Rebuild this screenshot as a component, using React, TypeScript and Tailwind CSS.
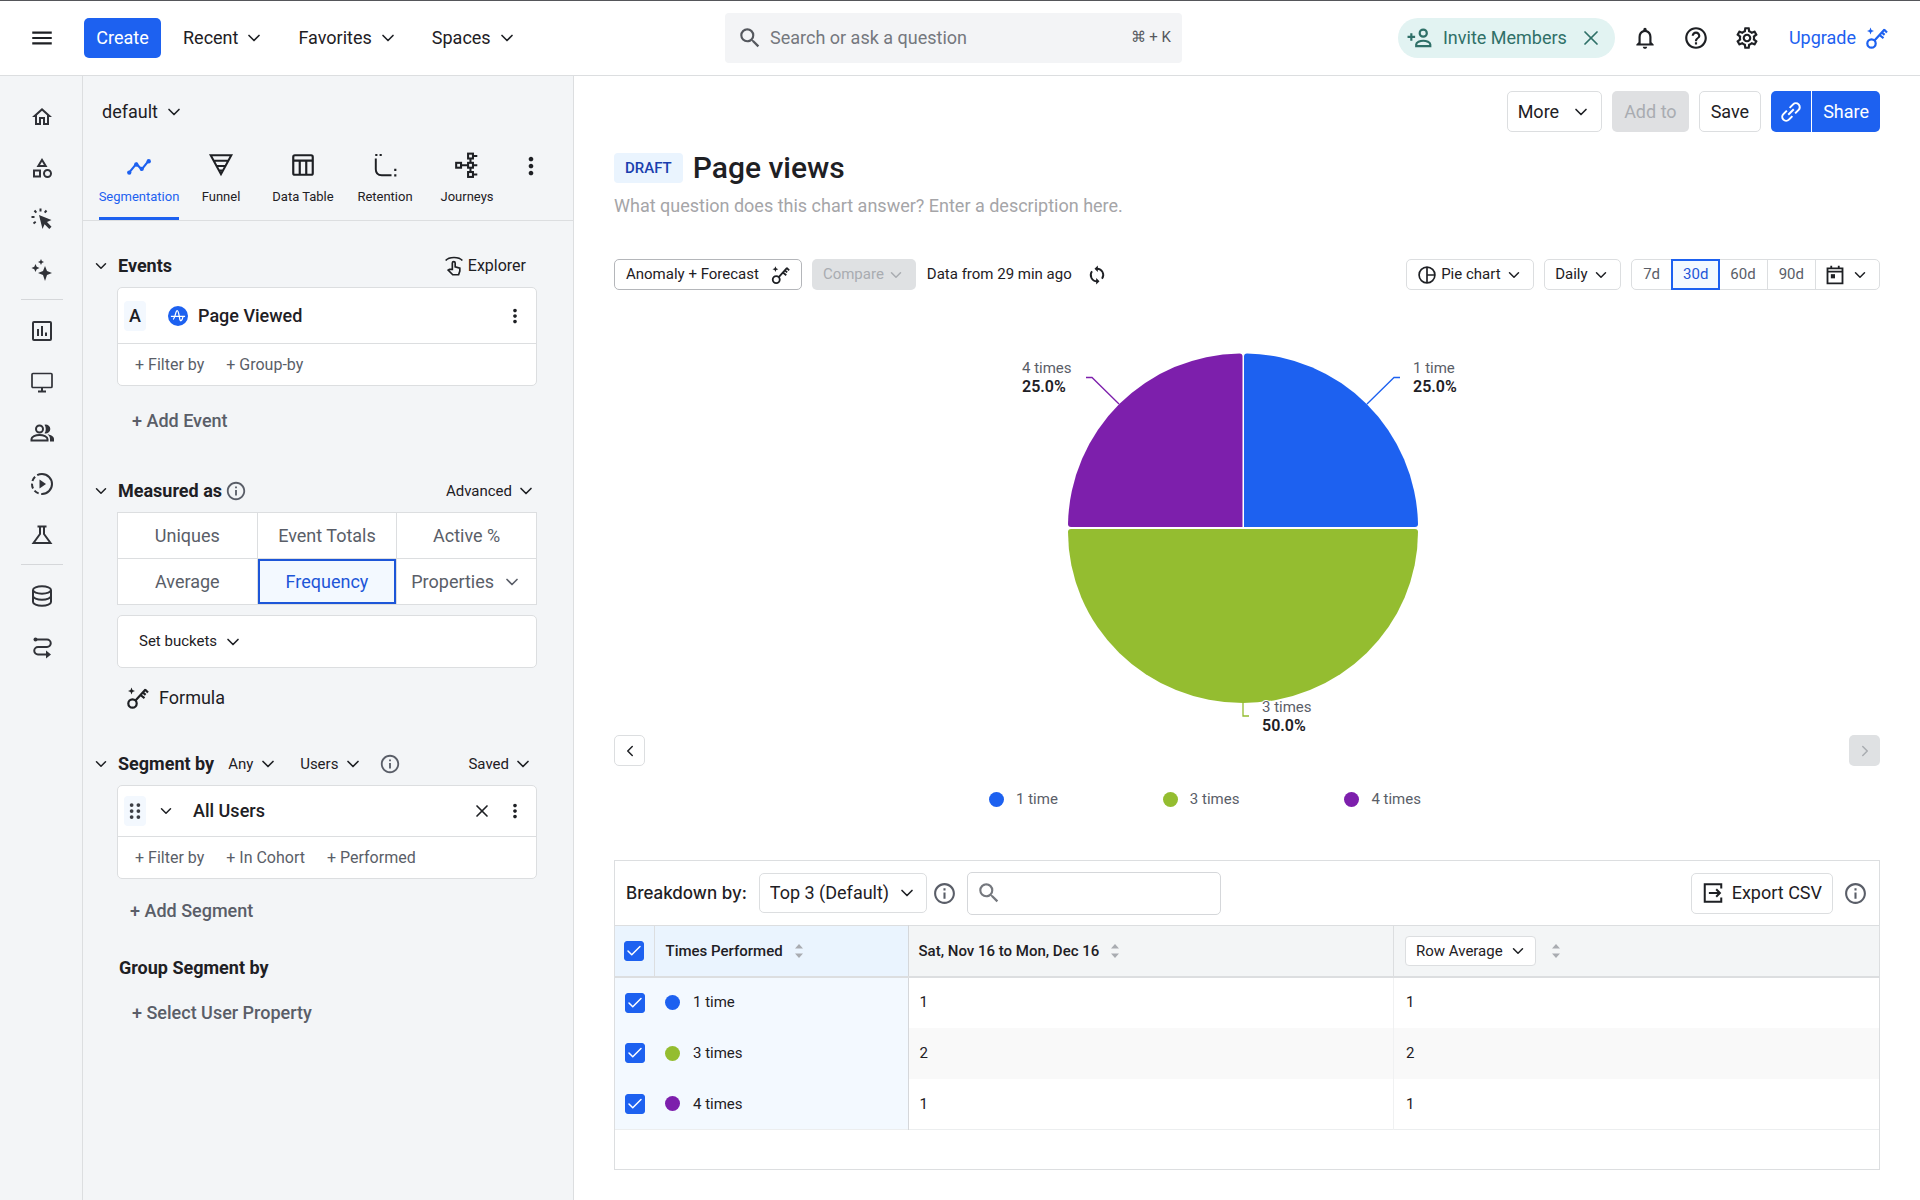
import { useState } from 'react'
import type { ReactNode, SVGProps } from 'react'
import clsx from 'clsx'
import { Check, ChevronDown, ChevronLeft, ChevronRight, X } from 'lucide-react'
import {
  MdHelpOutline,
  MdInfoOutline,
  MdMenu,
  MdMoreVert,
  MdNotificationsNone,
  MdOutlineCategory,
  MdOutlineHome,
  MdOutlineSettings,
  MdSearch,
} from 'react-icons/md'

const series = [
  { id: 's1', label: '1 time', dot: 'bg-[#1d61f0]', value: 1, average: 1 },
  { id: 's3', label: '3 times', dot: 'bg-[#94bd30]', value: 2, average: 2 },
  { id: 's4', label: '4 times', dot: 'bg-[#7d1fac]', value: 1, average: 1 },
]

/* ---------- Icons ---------- */

function Icon({ children, className = 'size-6', ...rest }: SVGProps<SVGSVGElement>) {
  return (
    <svg
      viewBox="0 0 24 24"
      fill="none"
      stroke="currentColor"
      strokeWidth="2"
      aria-hidden="true"
      className={clsx('shrink-0', className)}
      {...rest}
    >
      {children}
    </svg>
  )
}

function KeyIcon({ className }: { className?: string }) {
  return (
    <Icon className={className} strokeWidth="2.2">
      <circle cx="7.5" cy="17.5" r="4.2" />
      <path d="M10.5 14.5 20.5 3.5M20 3.5l3 3M15.5 9l4 3.2M17.8 6.4l2.8 2.4" />
      <path d="M6.5 1.5l1 2.5 2.5 1-2.5 1-1 2.5-1-2.5L3 5l2.5-1z" fill="currentColor" stroke="none" />
    </Icon>
  )
}

function ClickIcon() {
  return (
    <Icon>
      <path d="M9 8l12.500 5-4.500 2 4.500 4.700-2.200 2.200-4.700-4.700L12.500 22z" fill="currentColor" stroke="none" />
      <path d="M10.500 1.500v3M4.500 3.500l1.800 2.200M16.500 3.500l-1.800 2.200M1.500 10h3M3.500 16.500l2.200-1.700" />
    </Icon>
  )
}

function SparkleIcon() {
  return (
    <Icon fill="currentColor" stroke="none">
      <path d="M15 8l2 5 5 2-5 2-2 6-2-6-5-2 5-2z" />
      <path d="M5.500 6l1.200 2.800L9.500 10l-2.800 1.200L5.500 14l-1.200-2.800L1.500 10l2.800-1.200z" />
      <path d="M11 1l.9 2.100L14 4l-2.100.9L11 7l-.9-2.100L8 4l2.100-.9z" />
    </Icon>
  )
}

function ChartBoxIcon() {
  return (
    <Icon>
      <rect x="3" y="3" width="18" height="18" rx="1" />
      <path d="M8 10v7M12 7v10M16 13.500v3.500" />
    </Icon>
  )
}

function MonitorIcon() {
  return (
    <Icon>
      <rect x="2" y="3.500" width="20" height="14" rx="1" strokeWidth="1.700" />
      <path d="M12 18v3M8 21.500h8" />
    </Icon>
  )
}

function PeopleIcon() {
  return (
    <Icon>
      <circle cx="9.500" cy="8" r="3.500" />
      <path d="M1.500 19.500V18c0-2.300 4-4 8-4s8 1.700 8 4v1.500z" />
      <path d="M14.500 3.700a4.500 4.500 0 1 1 0 8.600c1.700-2.200 1.700-6.400 0-8.600z" fill="currentColor" stroke="none" />
      <path d="M17.500 13.300c3.500.6 6.500 2.200 6.500 4.700v2.500h-4V18c0-2-1-3.500-2.500-4.700z" fill="currentColor" stroke="none" />
    </Icon>
  )
}

function ReplayIcon() {
  return (
    <Icon>
      <path d="M12 2a10 10 0 0 1 0 20" />
      <path d="M12 2a10 10 0 0 0 0 20" strokeDasharray="5 2.600" />
      <path d="M9.500 7.500v9l6.500-4.500z" fill="currentColor" stroke="none" />
    </Icon>
  )
}

function FlaskIcon() {
  return (
    <Icon>
      <path d="M7.500 3.500h9M10 3.500V11l-6.500 9h17L14 11V3.500" />
    </Icon>
  )
}

function DatabaseIcon() {
  return (
    <Icon>
      <ellipse cx="12" cy="6" rx="9" ry="3.700" />
      <path d="M3 6v12c0 2 4 3.700 9 3.700s9-1.700 9-3.700V6M3 12c0 2 4 3.700 9 3.700s9-1.700 9-3.700" />
    </Icon>
  )
}

function RouteIcon() {
  return (
    <Icon>
      <path d="M6 4.500h11a3.500 3.500 0 0 1 0 7.500H8a3.500 3.500 0 0 0 0 7.500h9" />
      <circle cx="5.500" cy="4.500" r="2" fill="currentColor" stroke="none" />
      <path d="M16 15.500l5 4-5 4z" fill="currentColor" stroke="none" />
    </Icon>
  )
}

function SegmentationIcon() {
  return (
    <Icon className="size-[26px]" strokeWidth="2">
      <path d="M2.500 19.500l7-8.500 5 5 6.500-8" />
      <g fill="currentColor" stroke="none">
        <circle cx="3" cy="19" r="2" />
        <circle cx="9.500" cy="11.500" r="2" />
        <circle cx="14.500" cy="15.500" r="2" />
        <circle cx="21" cy="8.500" r="2" />
      </g>
    </Icon>
  )
}

function FunnelIcon() {
  return (
    <Icon className="size-[26px]" strokeWidth="1.900">
      <path d="M2.500 3h19L12 20.500zM5 8h14M8 13h8M10.500 17h3" />
    </Icon>
  )
}

function DataTableIcon() {
  return (
    <Icon className="size-[26px]">
      <rect x="3" y="3" width="18" height="18" rx="1.500" />
      <path d="M3 8h18M9 8v13M15 8v13" />
    </Icon>
  )
}

function RetentionIcon() {
  return (
    <Icon className="size-[26px]" strokeWidth="1.800">
      <path d="M3.500 6v10q0 5.500 5.500 5.500h9" />
      <path d="M3 2.800h2M7 2.800h2M20.500 16.500h2M20.500 21.500h2" strokeWidth="2" />
    </Icon>
  )
}

function JourneysIcon() {
  return (
    <Icon className="size-[26px]" strokeWidth="1.900">
      <rect x="2" y="10" width="4.500" height="4.500" />
      <rect x="13" y="1.500" width="4.500" height="4.500" />
      <rect x="13" y="10" width="4.500" height="4.500" />
      <rect x="13" y="18.500" width="4.500" height="4.500" />
      <path d="M6.500 12.200H13M15.200 6v4M15.200 14.500v4M17.500 3.700h4M17.500 12.200h4M17.500 20.700h4" />
    </Icon>
  )
}

function ExplorerIcon() {
  return (
    <Icon className="size-5" strokeWidth="2">
      <path d="M2 5.500C6 .5 18 .5 22 5.500" />
      <path d="M10 16V8.500a1.700 1.700 0 0 1 3.400 0V13l5.600 1.500v3.500l-1.500 4.500h-7L5 17l1.500-1z" />
    </Icon>
  )
}

function EventIcon() {
  return (
    <Icon className="size-5" strokeWidth="1.500">
      <circle cx="12" cy="12" r="12" fill="#1d61f0" stroke="none" />
      <path
        d="M3.500 12.500h17M6 16c2.500-1 3.200-10.500 5-10.500s2.200 6 3.200 10.500c.8 3 2.500 2 3.800-3"
        stroke="#fff"
      />
    </Icon>
  )
}

function LinkIcon() {
  return (
    <Icon className="size-[22px]" strokeWidth="2.200">
      <path d="M10.500 7.500l3.800-3.800a4.200 4.200 0 0 1 6 6L16.500 13.500M13.500 16.500l-3.800 3.800a4.200 4.200 0 0 1-6-6L7.500 10.500M9 15l6-6" />
    </Icon>
  )
}

function SyncIcon() {
  return (
    <Icon className="size-5" strokeWidth="2.200">
      <path d="M12 4.500a7.500 7.500 0 0 1 6 12M12 19.500a7.500 7.500 0 0 1-6-12" />
      <path d="M13 .5v8l-4-4zM11 15.500v8l4-4z" fill="currentColor" stroke="none" />
    </Icon>
  )
}

function PieIcon() {
  return (
    <Icon className="size-5" strokeWidth="2">
      <circle cx="12" cy="12" r="9.500" />
      <path d="M12 2.500v19M12 12h9.500" />
    </Icon>
  )
}

function CalendarIcon() {
  return (
    <Icon className="size-5" strokeWidth="2.200">
      <path d="M3 4h18v18H3zM3 8h18M7.500 1v3M16.500 1v3" />
      <path d="M7 11h5v5H7z" fill="currentColor" stroke="none" />
    </Icon>
  )
}

function InviteIcon() {
  return (
    <Icon className="size-[26px]" strokeWidth="2">
      <circle cx="15" cy="7.500" r="3.300" />
      <path d="M8.500 19.500v-1.500c0-2 3.500-3.500 6.500-3.500s6.500 1.500 6.500 3.500v1.500zM4 7.500v7M.5 11h7" />
    </Icon>
  )
}

function ExportIcon() {
  return (
    <Icon className="size-[22px]" strokeWidth="2.200">
      <path d="M21 7V2.500H3v19h18V17M7.500 12H19M15.500 8l4 4-4 4" />
    </Icon>
  )
}

function DragIcon() {
  return (
    <Icon className="size-[18px]" fill="currentColor" stroke="none">
      {[4, 12, 20].map(y => (
        <g key={y}>
          <circle cx="7.500" cy={y} r="2.500" />
          <circle cx="16.500" cy={y} r="2.500" />
        </g>
      ))}
    </Icon>
  )
}

function SortIcon() {
  return (
    <svg viewBox="0 0 8 14" className="h-[14px] w-2 shrink-0 fill-[#a9acb1]" aria-hidden="true">
      <path d="M4 0l4 4.500H0zM4 14L0 9.500h8z" />
    </svg>
  )
}

/* ---------- Small controls ---------- */

interface PickProps {
  label: string
  value: string
  className?: string
  chevron?: string
}

function Pick({ label, value, className, chevron = 'right-0 size-5' }: PickProps) {
  return (
    <span className="relative inline-flex items-center">
      <select aria-label={label} className={clsx('appearance-none outline-none', className)}>
        <option>{value}</option>
      </select>
      <ChevronDown className={clsx('pointer-events-none absolute', chevron)} />
    </span>
  )
}

function Tick({ label, id }: { label: string; id: string }) {
  return (
    <span className="relative flex size-5">
      <input
        id={id}
        type="checkbox"
        defaultChecked
        aria-label={label}
        className="peer size-5 appearance-none rounded-[3px] border border-[#a9acb1] bg-white checked:border-[#1d61f0] checked:bg-[#1d61f0]"
      />
      <Check className="pointer-events-none absolute inset-px hidden size-[18px] text-white peer-checked:block" strokeWidth={2} />
    </span>
  )
}

function SectionHeader({ title, children }: { title: string; children?: ReactNode }) {
  return (
    <div className="flex h-7 items-center pr-9 pl-[9px]">
      <button type="button" aria-label={`Collapse ${title}`}>
        <ChevronDown className="size-[18px]" />
      </button>
      <h2 className="ml-2 text-lg font-bold">{title}</h2>
      {children}
    </div>
  )
}

/* ---------- Page parts ---------- */

function TopBar() {
  return (
    <header className="flex h-[76px] items-center border-t border-b border-t-[#55565a] border-b-[#dcdee0] bg-white pr-8 pl-[29px] text-lg">
      <div className="flex flex-1 items-center">
        <button type="button" aria-label="Menu">
          <MdMenu className="size-[26px]" />
        </button>
        <button type="button" className="ml-[29px] h-10 w-[77px] rounded-[5px] bg-[#1d61f0] text-white">
          Create
        </button>
        <nav className="ml-[22px] flex items-center gap-[34px]">
          {['Recent', 'Favorites', 'Spaces'].map(item => (
            <button key={item} type="button" className="flex items-center gap-1.5">
              {item}
              <ChevronDown className="size-5" />
            </button>
          ))}
        </nav>
      </div>

      <label className="mr-[10px] flex h-[50px] w-[457px] items-center rounded bg-[#f3f4f6] pr-[11px] pl-3 text-[#55585e]">
        <MdSearch className="size-[26px] shrink-0" />
        <input
          type="text"
          aria-label="Search"
          placeholder="Search or ask a question"
          className="ml-[7px] min-w-0 flex-1 outline-none placeholder:text-[#75787e]"
        />
        <span className="text-[15px]">⌘ + K</span>
      </label>

      <div className="flex flex-1 items-center justify-end">
        <div className="flex h-10 items-center rounded-full bg-[#e2f3f2] pr-3 pl-[9px] text-[#2f7068]">
          <button type="button" className="flex items-center gap-[10px]">
            <InviteIcon />
            Invite Members
          </button>
          <button type="button" aria-label="Dismiss" className="ml-3">
            <X className="size-6" strokeWidth={1.75} />
          </button>
        </div>
        <div className="mr-[29px] ml-[17px] flex items-center gap-[25px]">
          <button type="button" aria-label="Notifications">
            <MdNotificationsNone className="size-[26px]" />
          </button>
          <button type="button" aria-label="Help">
            <MdHelpOutline className="size-[26px]" />
          </button>
          <button type="button" aria-label="Settings">
            <MdOutlineSettings className="size-[26px]" />
          </button>
        </div>
        <a href="#upgrade" className="flex items-center gap-2 text-[#1d61f0]">
          Upgrade
          <KeyIcon className="size-6" />
        </a>
      </div>
    </header>
  )
}

const railGroups = [
  [
    { name: 'Home', icon: <MdOutlineHome className="size-6" /> },
    { name: 'Catalog', icon: <MdOutlineCategory className="size-6" /> },
    { name: 'Actions', icon: <ClickIcon /> },
    { name: 'Ask AI', icon: <SparkleIcon /> },
  ],
  [
    { name: 'Analytics', icon: <ChartBoxIcon /> },
    { name: 'Guides', icon: <MonitorIcon /> },
    { name: 'Users', icon: <PeopleIcon /> },
    { name: 'Session Replay', icon: <ReplayIcon /> },
    { name: 'Experiment', icon: <FlaskIcon /> },
  ],
  [
    { name: 'Data', icon: <DatabaseIcon /> },
    { name: 'Pipelines', icon: <RouteIcon /> },
  ],
]

function Rail() {
  return (
    <nav className="flex w-[83px] shrink-0 flex-col items-center border-r border-[#dcdee0] pt-[15px] pl-[2px] text-[#303238]">
      {railGroups.map((group, i) => (
        <div
          key={i}
          className={clsx('flex flex-col items-center', i > 0 && 'mt-1 border-t border-[#d5d7da] pt-[5px]')}
        >
          {group.map(item => (
            <button
              key={item.name}
              type="button"
              aria-label={item.name}
              className="flex h-[51px] w-[42px] items-center justify-center"
            >
              {item.icon}
            </button>
          ))}
        </div>
      ))}
    </nav>
  )
}

const tabs = [
  { name: 'Segmentation', icon: <SegmentationIcon /> },
  { name: 'Funnel', icon: <FunnelIcon /> },
  { name: 'Data Table', icon: <DataTableIcon /> },
  { name: 'Retention', icon: <RetentionIcon /> },
  { name: 'Journeys', icon: <JourneysIcon /> },
]

const measures = ['Uniques', 'Event Totals', 'Active %', 'Average', 'Frequency', 'Properties']

function QueryPanel() {
  const [tab, setTab] = useState('Segmentation')
  const [measure, setMeasure] = useState('Frequency')

  return (
    <aside className="w-[491px] shrink-0 border-r border-[#dcdee0]">
      <div className="mt-[22px] flex h-7 items-center pl-[19px] text-lg">
        <Pick label="Project" value="default" className="pr-[26px]" />
      </div>

      <div className="mt-[26px] flex items-start gap-[2px] border-b border-[#dcdee0] pl-4">
        {tabs.map(t => (
          <button
            key={t.name}
            type="button"
            onClick={() => setTab(t.name)}
            className={clsx(
              'flex w-20 flex-col items-center gap-[10px] border-b-3 pb-[11px] text-[13px] leading-[18px] whitespace-nowrap',
              t.name === tab ? 'border-[#1d61f0] text-[#1d61f0]' : 'border-transparent'
            )}
          >
            {t.icon}
            {t.name}
          </button>
        ))}
        <button type="button" aria-label="More chart types" className="ml-2">
          <MdMoreVert className="size-7" />
        </button>
      </div>

      {/* Events */}
      <section className="mt-[31px]">
        <SectionHeader title="Events">
          <button type="button" className="mr-[11px] ml-auto flex items-center gap-1 text-base">
            <ExplorerIcon />
            Explorer
          </button>
        </SectionHeader>
        <div className="mt-[7px] mr-9 ml-[34px] rounded-[5px] border border-[#dcdee0] bg-white">
          <div className="flex h-14 items-center border-b border-[#dcdee0] px-[6px] text-lg font-medium">
            <span className="flex h-[30px] w-[22px] items-center justify-center rounded bg-[#f3f8fe]">A</span>
            <button type="button" className="ml-[22px] flex items-center gap-[10px]">
              <EventIcon />
              Page Viewed
            </button>
            <button type="button" aria-label="Event options" className="mr-1 ml-auto">
              <MdMoreVert className="size-[22px]" />
            </button>
          </div>
          <div className="flex h-[41px] items-center gap-[22px] pl-[17px] text-base text-[#5a5e68]">
            <button type="button">+ Filter by</button>
            <button type="button">+ Group-by</button>
          </div>
        </div>
        <button type="button" className="mt-[21px] ml-[49px] block text-lg font-medium text-[#5a5e68]">
          + Add Event
        </button>
      </section>

      {/* Measured as */}
      <section className="mt-[42px]">
        <SectionHeader title="Measured as">
          <MdInfoOutline className="ml-[3px] size-[22px] text-[#5a5e68]" />
          <button type="button" className="mr-px ml-auto flex items-center gap-1 text-[15px]">
            Advanced
            <ChevronDown className="size-5" />
          </button>
        </SectionHeader>
        <div className="mt-[7px] mr-9 ml-[34px] grid grid-cols-3 gap-px border border-[#dcdee0] bg-[#dcdee0] text-lg">
          {measures.map(m => (
            <button
              key={m}
              type="button"
              onClick={() => setMeasure(m)}
              className={clsx(
                'flex h-[45px] items-center justify-center gap-2',
                m === measure
                  ? 'bg-[#f3f9ff] text-[#1d56d8] outline-2 -outline-offset-2 outline-[#1d56d8]'
                  : 'bg-white text-[#5a5e68]'
              )}
            >
              {m}
              {m === 'Properties' && <ChevronDown className="size-5" />}
            </button>
          ))}
        </div>
        <div className="mt-[10px] mr-9 ml-[34px] flex h-[53px] items-center rounded-[5px] border border-[#dcdee0] bg-white pl-[21px]">
          <button type="button" className="flex items-center gap-[6px] text-[15px]">
            Set buckets
            <ChevronDown className="size-5" />
          </button>
        </div>
        <button type="button" className="mt-4 ml-[42px] flex items-center gap-[10px] text-lg">
          <KeyIcon className="size-6" />
          Formula
        </button>
      </section>

      {/* Segment by */}
      <section className="mt-[38px]">
        <SectionHeader title="Segment by">
          <div className="ml-[14px] flex flex-1 items-center text-[15px]">
            <Pick label="Match" value="Any" className="pr-6" />
            <span className="ml-[22px] flex">
              <Pick label="Segment unit" value="Users" className="pr-6" />
            </span>
            <MdInfoOutline className="ml-4 size-[22px] text-[#5a5e68]" />
            <button type="button" className="mr-1 ml-auto flex items-center gap-1">
              Saved
              <ChevronDown className="size-5" />
            </button>
          </div>
        </SectionHeader>
        <div className="mt-[7px] mr-9 ml-[34px] rounded-[5px] border border-[#dcdee0] bg-white">
          <div className="flex h-[51px] items-center border-b border-[#dcdee0] px-[6px] text-lg font-medium">
            <span className="flex h-[30px] w-[22px] items-center justify-center rounded bg-[#f3f8fe] text-[#3c3f45]">
              <DragIcon />
            </span>
            <button type="button" aria-label="Expand segment" className="ml-[11px]">
              <ChevronDown className="size-[18px]" />
            </button>
            <span className="ml-[18px]">All Users</span>
            <button type="button" aria-label="Remove segment" className="ml-auto">
              <X className="size-5" />
            </button>
            <button type="button" aria-label="Segment options" className="mr-1 ml-3">
              <MdMoreVert className="size-[22px]" />
            </button>
          </div>
          <div className="flex h-[41px] items-center gap-[22px] pl-[17px] text-base text-[#5a5e68]">
            <button type="button">+ Filter by</button>
            <button type="button">+ In Cohort</button>
            <button type="button">+ Performed</button>
          </div>
        </div>
        <button type="button" className="mt-[18px] ml-[47px] block text-lg font-medium text-[#5a5e68]">
          + Add Segment
        </button>
      </section>

      <section className="mt-[29px]">
        <h2 className="ml-9 text-lg font-bold">Group Segment by</h2>
        <button type="button" className="mt-[17px] ml-[49px] block text-lg font-medium text-[#5a5e68]">
          + Select User Property
        </button>
      </section>
    </aside>
  )
}

function PieChart() {
  return (
    <svg
      viewBox="0 0 480 395"
      role="img"
      aria-label="Users by times performed"
      className="mx-auto h-[395px] w-[480px] text-[15px]"
    >
      <path d="M237 187V16.500q0-3 3-3A174 174 0 0 1 411 184q0 3-3 3z" fill="#1d61f0" />
      <path d="M235.500 187V16.500q0-3-3-3A174 174 0 0 0 61 184q0 3 3 3z" fill="#7d1fac" />
      <path d="M64 189H408q3 0 3 3A175 171 0 0 1 61 192q0-3 3-3z" fill="#94bd30" />
      <g fill="none" strokeWidth="1.300">
        <path d="M360 64l27-26.500h6" stroke="#1d61f0" />
        <path d="M112 64L85 37.500h-6" stroke="#7d1fac" />
        <path d="M236 363v13h6" stroke="#94bd30" />
      </g>
      <g fill="#5a5e68">
        <text x="15" y="33">4 times</text>
        <text x="406" y="33">1 time</text>
        <text x="255" y="372" stroke="#fff" strokeWidth="2" paintOrder="stroke">3 times</text>
      </g>
      <g fill="#1e2024" className="text-base font-semibold">
        <text x="15" y="52">25.0%</text>
        <text x="406" y="52">25.0%</text>
        <text x="255" y="391">50.0%</text>
      </g>
    </svg>
  )
}

function Breakdown() {
  return (
    <section className="mt-[49px] border border-[#dcdee0] pb-[39px]">
      <div className="flex h-16 items-center pr-[11px] pl-[11px] text-lg">
        <span className="font-['Inter'] text-[17px] font-medium">Breakdown by:</span>
        <span className="ml-3 flex">
          <Pick
            label="Breakdown by"
            value="Top 3 (Default)"
            className="h-10 rounded-[5px] border border-[#dcdee0] bg-white pr-9 pl-[10px]"
            chevron="right-[10px] size-5"
          />
        </span>
        <MdInfoOutline className="ml-[5px] size-[25px] text-[#5a5e68]" />
        <label className="ml-[10px] flex h-[43px] w-[254px] items-center rounded-[5px] border border-[#d5d7da] pl-2 text-[#75787e]">
          <MdSearch className="size-[26px] shrink-0" />
          <input type="text" aria-label="Search breakdown" className="min-w-0 flex-1 outline-none" />
        </label>
        <button
          type="button"
          className="ml-auto flex h-[41px] items-center gap-2 rounded-[5px] border border-[#dcdee0] px-[10px]"
        >
          <ExportIcon />
          Export CSV
        </button>
        <MdInfoOutline className="ml-[10px] size-[25px] text-[#5a5e68]" />
      </div>

      <table className="w-full table-fixed border-t border-[#dcdee0] text-left text-[15px]">
        <colgroup>
          <col className="w-[39px]" />
          <col className="w-[254px]" />
          <col />
          <col />
        </colgroup>
        <thead>
          <tr className="h-[51px] border-b-2 border-[#dcdee0] bg-[#f3f5f6]">
            <th className="border-r border-[#dcdee0] bg-[#eaf4fe] pl-[9px]">
              <Tick id="all" label="Select all rows" />
            </th>
            <th className="border-r border-[#d5d7da] bg-[#eaf4fe] pl-[11px] font-medium">
              <span className="flex items-center gap-3">
                Times Performed
                <SortIcon />
              </span>
            </th>
            <th className="border-r border-[#dcdee0] pl-[10px] font-medium">
              <span className="flex items-center gap-3">
                Sat, Nov 16 to Mon, Dec 16
                <SortIcon />
              </span>
            </th>
            <th className="pl-[11px] font-normal">
              <span className="flex items-center gap-4">
                <Pick
                  label="Aggregate"
                  value="Row Average"
                  className="h-[30px] rounded border border-[#dcdee0] bg-white pr-8 pl-[10px]"
                  chevron="right-[9px] size-[18px]"
                />
                <SortIcon />
              </span>
            </th>
          </tr>
        </thead>
        <tbody>
          {series.map(row => (
            <tr key={row.id} className="h-[51px] even:bg-[#f9f9f9] last:border-b last:border-[#eceeef]">
              <td className="bg-[#f3f9ff] pl-[10px]">
                <Tick id={row.id} label={`Show ${row.label}`} />
              </td>
              <td className="border-r border-[#d5d7da] bg-[#f3f9ff] pl-[11px]">
                <label htmlFor={row.id} className="flex items-center gap-[13px]">
                  <span className={clsx('size-[15px] rounded-full', row.dot)} />
                  {row.label}
                </label>
              </td>
              <td className="border-r border-[#f0f1f2] pl-[11px]">{row.value}</td>
              <td className="pl-3">{row.average}</td>
            </tr>
          ))}
        </tbody>
      </table>
    </section>
  )
}

const ranges = ['7d', '30d', '60d', '90d']

function ChartArea() {
  const [range, setRange] = useState('30d')

  return (
    <main className="min-w-0 flex-1 bg-white px-10 pt-[15px] pb-[30px]">
      <div className="flex justify-end gap-[10px] text-lg">
        <button type="button" className="flex h-[41px] items-center gap-3 rounded-[5px] border border-[#dcdee0] px-[10px]">
          More
          <ChevronDown className="size-5" />
        </button>
        <button type="button" disabled className="h-[41px] rounded-[5px] bg-[#dfe0e2] px-3 text-[#a9acb1]">
          Add to
        </button>
        <button type="button" className="h-[41px] rounded-[5px] border border-[#dcdee0] px-[11px]">
          Save
        </button>
        <div className="flex gap-px overflow-hidden rounded-[5px] text-white">
          <button type="button" aria-label="Copy link" className="flex w-10 items-center justify-center bg-[#1d61f0]">
            <LinkIcon />
          </button>
          <button type="button" className="bg-[#1d61f0] px-[11px]">Share</button>
        </div>
      </div>

      <div className="mt-[17px] flex h-[38px] items-center gap-[10px]">
        <span className="flex h-[30px] items-center rounded bg-[#eaf4fe] px-[11px] text-[15px] font-medium text-[#1a3fae]">
          DRAFT
        </span>
        <h1 className="text-[30px] leading-[38px] font-medium">Page views</h1>
      </div>
      <input
        type="text"
        aria-label="Description"
        placeholder="What question does this chart answer? Enter a description here."
        className="mt-[5px] block h-7 w-full text-lg outline-none placeholder:text-[#a5a5a8]"
      />

      <div className="mt-[39px] flex h-[31px] items-stretch text-[15px]">
        <button type="button" className="flex items-center gap-[11px] rounded-[5px] border border-[#b4b6ba] px-[11px]">
          Anomaly + Forecast
          <KeyIcon className="size-5" />
        </button>
        <button type="button" disabled className="ml-[10px] flex items-center gap-[3px] rounded-[5px] bg-[#dfe1e3] px-[11px] text-[#a9acb1]">
          Compare
          <ChevronDown className="size-[18px]" />
        </button>
        <span className="ml-[11px] flex items-center">Data from 29 min ago</span>
        <button type="button" aria-label="Refresh" className="ml-[15px]">
          <SyncIcon />
        </button>

        <div className="ml-auto flex gap-[10px]">
          <div className="flex items-center rounded-[5px] border border-[#dcdee0] px-[10px]">
            <PieIcon />
            <Pick label="Chart type" value="Pie chart" className="pr-[22px] pl-1" chevron="right-0 size-[18px]" />
          </div>
          <div className="flex items-center rounded-[5px] border border-[#dcdee0] px-[10px]">
            <Pick label="Interval" value="Daily" className="pr-[22px]" chevron="right-0 size-[18px]" />
          </div>
          <div className="flex rounded-[5px] border border-[#dcdee0] text-[#5a5e68]">
            {ranges.map(r => (
              <button
                key={r}
                type="button"
                onClick={() => setRange(r)}
                className={clsx(
                  'px-[11px]',
                  r === range
                    ? 'bg-[#f3f9ff] text-[#1d56d8] outline-2 -outline-offset-1 outline-[#1d61f0]'
                    : 'border-r border-[#dcdee0]'
                )}
              >
                {r}
              </button>
            ))}
            <button type="button" aria-label="Custom range" className="flex items-center gap-[6px] pr-[10px] pl-[9px] text-[#1e2024]">
              <CalendarIcon />
              <ChevronDown className="size-[18px]" />
            </button>
          </div>
        </div>
      </div>

      <div className="mt-[50px]">
        <PieChart />
      </div>

      <div className="flex justify-between">
        <button type="button" aria-label="Previous" className="flex size-[31px] items-center justify-center rounded-[5px] border border-[#dcdee0]">
          <ChevronLeft className="size-[18px]" />
        </button>
        <button type="button" aria-label="Next" disabled className="flex size-[31px] items-center justify-center rounded-[5px] bg-[#dfe1e3] text-[#a9acb1]">
          <ChevronRight className="size-[18px]" />
        </button>
      </div>

      <ul className="mt-[21px] mr-[84px] flex h-6 items-center justify-center gap-[105px] text-[15px] text-[#5a5e68]">
        {series.map(s => (
          <li key={s.id} className="flex items-center gap-3">
            <span className={clsx('size-[15px] rounded-full', s.dot)} />
            {s.label}
          </li>
        ))}
      </ul>

      <Breakdown />
    </main>
  )
}

export default function App() {
  return (
    <div className="flex min-h-screen flex-col bg-[#f3f5f7] font-['Roboto',sans-serif] text-[#1e2024]">
      <TopBar />
      <div className="flex flex-1">
        <Rail />
        <QueryPanel />
        <ChartArea />
      </div>
    </div>
  )
}
